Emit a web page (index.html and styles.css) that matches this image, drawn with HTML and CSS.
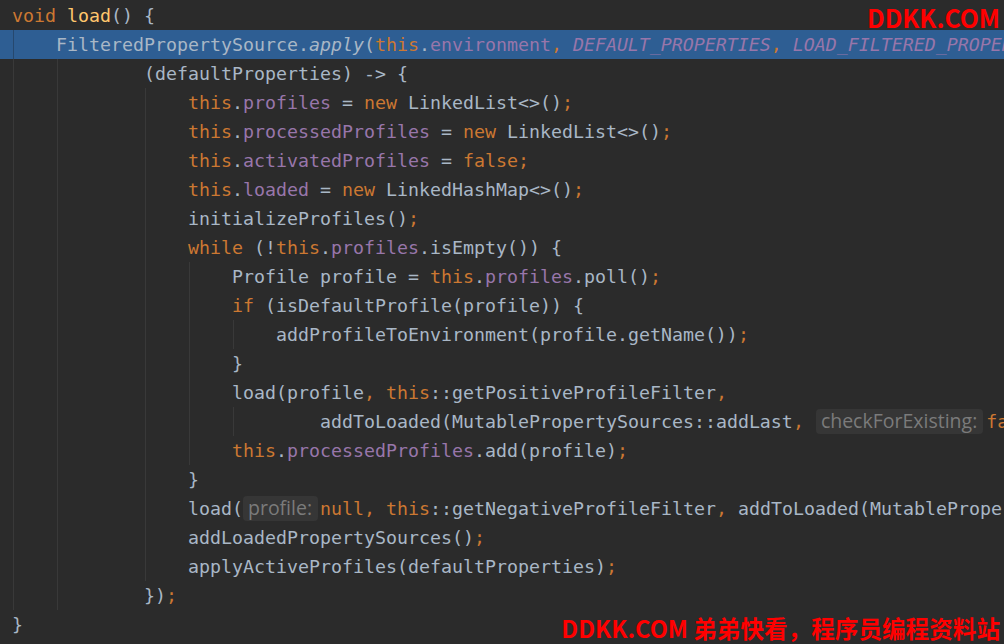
FILE: index.html
```html
<!DOCTYPE html>
<html lang="en">
<head>
    <meta charset="UTF-8">
    <meta name="viewport" content="width=device-width, initial-scale=1.0">
    <title>load()</title>
    <link rel="stylesheet" href="styles.css">
</head>
<body>
    <div class="editor">
        <div class="ln"><span class="c"><span class="k">void</span> <span class="m">load</span>() {</span></div>
        <div class="ln hl"><span class="g">    </span><span class="c">FilteredPropertySource.<span class="i">apply</span>(<span class="k">this</span>.<span class="f">environment</span><span class="k">,</span> <span class="s">DEFAULT_PROPERTIES</span><span class="k">,</span> <span class="s">LOAD_FILTERED_PROPERTY</span><span class="k">,</span></span></div>
        <div class="ln"><span class="g">    </span><span class="g">    </span><span class="p">    </span><span class="c">(defaultProperties) -&gt; {</span></div>
        <div class="ln"><span class="g">    </span><span class="g">    </span><span class="p">    </span><span class="g">    </span><span class="c"><span class="k">this</span>.<span class="f">profiles</span> = <span class="k">new</span> LinkedList&lt;&gt;()<span class="k">;</span></span></div>
        <div class="ln"><span class="g">    </span><span class="g">    </span><span class="p">    </span><span class="g">    </span><span class="c"><span class="k">this</span>.<span class="f">processedProfiles</span> = <span class="k">new</span> LinkedList&lt;&gt;()<span class="k">;</span></span></div>
        <div class="ln"><span class="g">    </span><span class="g">    </span><span class="p">    </span><span class="g">    </span><span class="c"><span class="k">this</span>.<span class="f">activatedProfiles</span> = <span class="k">false;</span></span></div>
        <div class="ln"><span class="g">    </span><span class="g">    </span><span class="p">    </span><span class="g">    </span><span class="c"><span class="k">this</span>.<span class="f">loaded</span> = <span class="k">new</span> LinkedHashMap&lt;&gt;()<span class="k">;</span></span></div>
        <div class="ln"><span class="g">    </span><span class="g">    </span><span class="p">    </span><span class="g">    </span><span class="c">initializeProfiles()<span class="k">;</span></span></div>
        <div class="ln"><span class="g">    </span><span class="g">    </span><span class="p">    </span><span class="g">    </span><span class="c"><span class="k">while</span> (!<span class="k">this</span>.<span class="f">profiles</span>.isEmpty()) {</span></div>
        <div class="ln"><span class="g">    </span><span class="g">    </span><span class="p">    </span><span class="g">    </span><span class="g">    </span><span class="c">Profile profile = <span class="k">this</span>.<span class="f">profiles</span>.poll()<span class="k">;</span></span></div>
        <div class="ln"><span class="g">    </span><span class="g">    </span><span class="p">    </span><span class="g">    </span><span class="g">    </span><span class="c"><span class="k">if</span> (isDefaultProfile(profile)) {</span></div>
        <div class="ln"><span class="g">    </span><span class="g">    </span><span class="p">    </span><span class="g">    </span><span class="g">    </span><span class="g">    </span><span class="c">addProfileToEnvironment(profile.getName())<span class="k">;</span></span></div>
        <div class="ln"><span class="g">    </span><span class="g">    </span><span class="p">    </span><span class="g">    </span><span class="g">    </span><span class="c">}</span></div>
        <div class="ln"><span class="g">    </span><span class="g">    </span><span class="p">    </span><span class="g">    </span><span class="g">    </span><span class="c">load(profile<span class="k">,</span> <span class="k">this</span>::getPositiveProfileFilter<span class="k">,</span></span></div>
        <div class="ln"><span class="g">    </span><span class="g">    </span><span class="p">    </span><span class="g">    </span><span class="g">    </span><span class="g">    </span><span class="p">    </span><span class="c">addToLoaded(MutablePropertySources::addLast<span class="k">,</span> <span class="h">checkForExisting:</span><span class="k">false</span>))<span class="k">;</span></span></div>
        <div class="ln"><span class="g">    </span><span class="g">    </span><span class="p">    </span><span class="g">    </span><span class="g">    </span><span class="c"><span class="k">this</span>.<span class="f">processedProfiles</span>.add(profile)<span class="k">;</span></span></div>
        <div class="ln"><span class="g">    </span><span class="g">    </span><span class="p">    </span><span class="g">    </span><span class="c">}</span></div>
        <div class="ln"><span class="g">    </span><span class="g">    </span><span class="p">    </span><span class="g">    </span><span class="c">load(<span class="h h-first">profile:</span><span class="k">null,</span> <span class="k">this</span>::getNegativeProfileFilter<span class="k">,</span> addToLoaded(MutablePropertySources::addLast<span class="k">,</span> <span class="h">checkForExisting:</span><span class="k">true</span>))<span class="k">;</span></span></div>
        <div class="ln"><span class="g">    </span><span class="g">    </span><span class="p">    </span><span class="g">    </span><span class="c">addLoadedPropertySources()<span class="k">;</span></span></div>
        <div class="ln"><span class="g">    </span><span class="g">    </span><span class="p">    </span><span class="g">    </span><span class="c">applyActiveProfiles(defaultProperties)<span class="k">;</span></span></div>
        <div class="ln"><span class="g">    </span><span class="g">    </span><span class="p">    </span><span class="c">})<span class="k">;</span></span></div>
        <div class="ln"><span class="c">}</span></div>
    </div>

    <div class="wm wm-top">DDKK.COM</div>
    <div class="wm wm-bottom">DDKK.COM 弟弟快看，程序员编程资料站</div>
</body>
</html>
```

FILE: styles.css
```css
body {
    margin: 0;
    width: 1004px;
    height: 644px;
    overflow: hidden;
    background-color: #2b2b2b;
    position: relative;
}
.editor {
    padding-top: 1px;
    font-family: "DejaVu Sans Mono", monospace;
    font-size: 18.27px;
    color: #a9b7c6;
}
.ln {
    display: flex;
    height: 29px;
    line-height: 29px;
    padding-left: 12px;
    white-space: pre;
}
.ln > span {
    flex-shrink: 0;
}
.hl {
    background-color: #2e5e93;
}
.g {
    background-image: linear-gradient(to right, transparent 1px, #393939 1px, #393939 2px, transparent 2px);
}
.hl .g {
    background-image: linear-gradient(to right, transparent 1px, #26486e 1px, #26486e 2px, transparent 2px);
}
.k {
    color: #cc7832;
}
.f {
    color: #9876aa;
}
.m {
    color: #ffc66d;
}
.i {
    font-style: italic;
}
.s {
    color: #9876aa;
    font-style: italic;
}
.h {
    display: inline-block;
    vertical-align: top;
    height: 25px;
    line-height: 24px;
    margin: 2px 3px 0 1px;
    padding: 0 6px 0 5px;
    border-radius: 4px;
    background-color: #363636;
    color: #7b7b7b;
    font-family: "Open Sans", "Noto Sans", sans-serif;
    font-size: 19.5px;
    font-style: normal;
}
.h-first {
    margin-left: 0;
    margin-right: 2px;
}
.wm {
    position: absolute;
    color: #ff0000;
    font-family: "Noto Sans CJK SC", sans-serif;
    font-weight: bold;
    line-height: 1;
    white-space: nowrap;
}
.wm-top {
    top: 5px;
    right: 4px;
    font-size: 24.8px;
}
.wm-bottom {
    bottom: 3px;
    right: 4px;
    font-size: 23.6px;
}
```
